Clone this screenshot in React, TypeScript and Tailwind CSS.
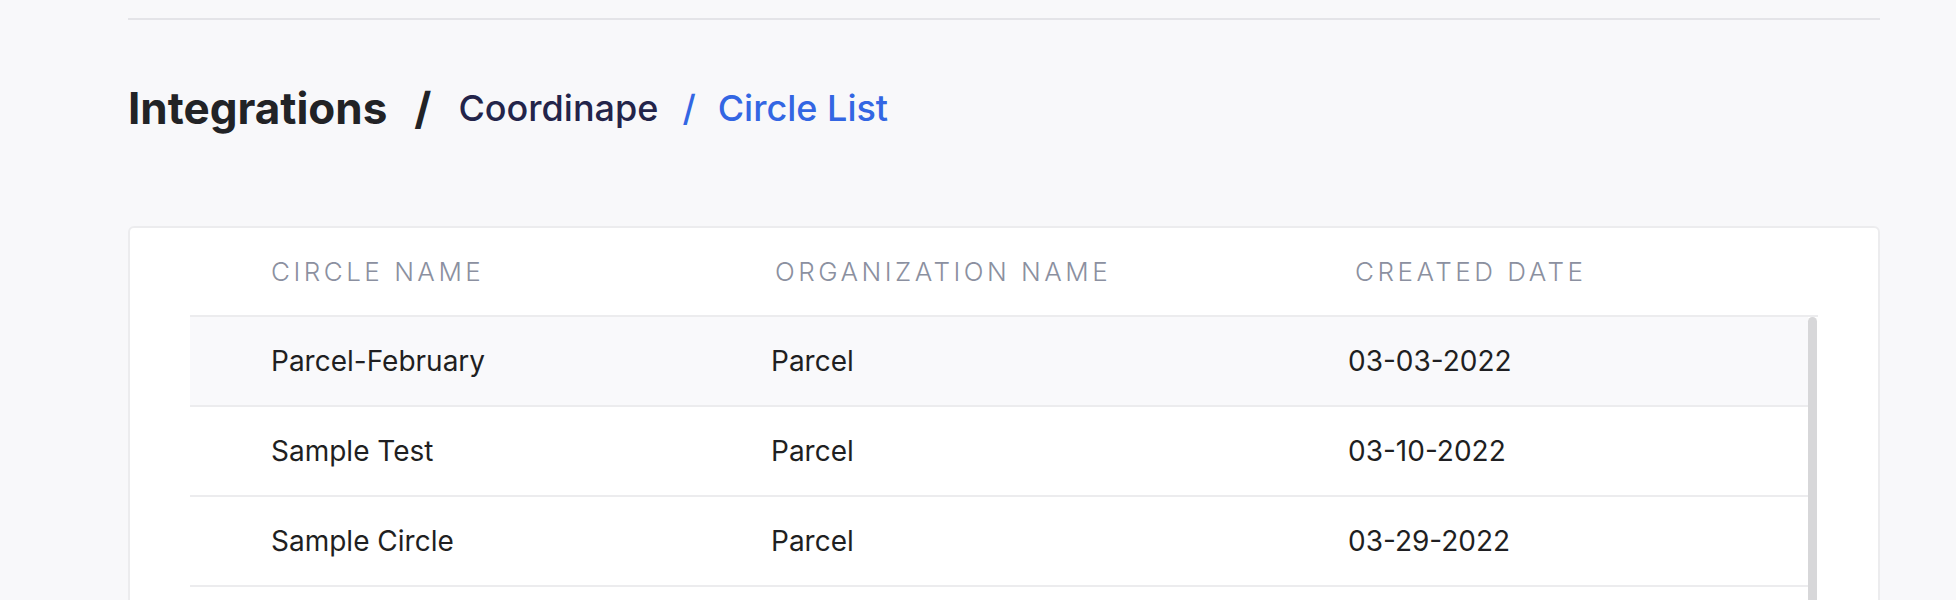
import React from "react";

const rows = [
  { name: "Parcel-February", org: "Parcel", date: "03-03-2022", hl: true },
  { name: "Sample Test", org: "Parcel", date: "03-10-2022", hl: false },
  { name: "Sample Circle", org: "Parcel", date: "03-29-2022", hl: false },
];

export default function App() {
  return (
    <div
      className="min-h-[600px] h-[600px] overflow-hidden bg-[#f8f8fa] pl-[128px] pr-[76px]"
      style={{ fontFamily: "Inter, 'Noto Sans', sans-serif" }}
    >
      <div className="pt-[18px]">
        <div className="h-[2px] bg-[#e4e4e8]" />
      </div>
      <div className="mt-[48px] flex h-[80px] items-center">
        <span className="text-[44px] font-bold leading-none text-[#222326]">Integrations</span>
        <span className="ml-[27px] text-[44px] font-bold leading-none text-[#222326]">/</span>
        <span className="ml-[27px] text-[36px] font-medium leading-none text-[#23244a]">Coordinape</span>
        <span className="ml-[24px] text-[36px] font-medium leading-none text-[#3366e3]">/</span>
        <span className="ml-[22px] text-[36px] font-medium leading-none text-[#3366e3]">Circle List</span>
      </div>
      <div className="mt-[78px] h-[400px] rounded-[6px] border-2 border-[#ececee] bg-white px-[60px]">
        <div className="flex h-[87px] items-center pl-[81px] text-[26px] font-light uppercase tracking-[3.5px] text-[#8b90a0]">
          <div className="w-[504px]">Circle Name</div>
          <div className="w-[580px]">Organization Name</div>
          <div>Created Date</div>
        </div>
        <div className="flex border-t-2 border-[#ececee]">
          <div className="flex-1">
            {rows.map((r) => (
              <div
                key={r.name}
                className={`flex h-[90px] items-center border-b-2 border-[#ececee] pl-[81px] text-[28px] text-[#1f1f22] ${
                  r.hl ? "bg-[#f9f9fb]" : "bg-white"
                }`}
              >
                <div className="w-[500px]">{r.name}</div>
                <div className="w-[577px]">{r.org}</div>
                <div>{r.date}</div>
              </div>
            ))}
          </div>
          <div className="w-[10px]">
            <div className="h-[400px] w-[9px] rounded-t-full bg-[#d7d7d9]" />
          </div>
        </div>
      </div>
    </div>
  );
}
